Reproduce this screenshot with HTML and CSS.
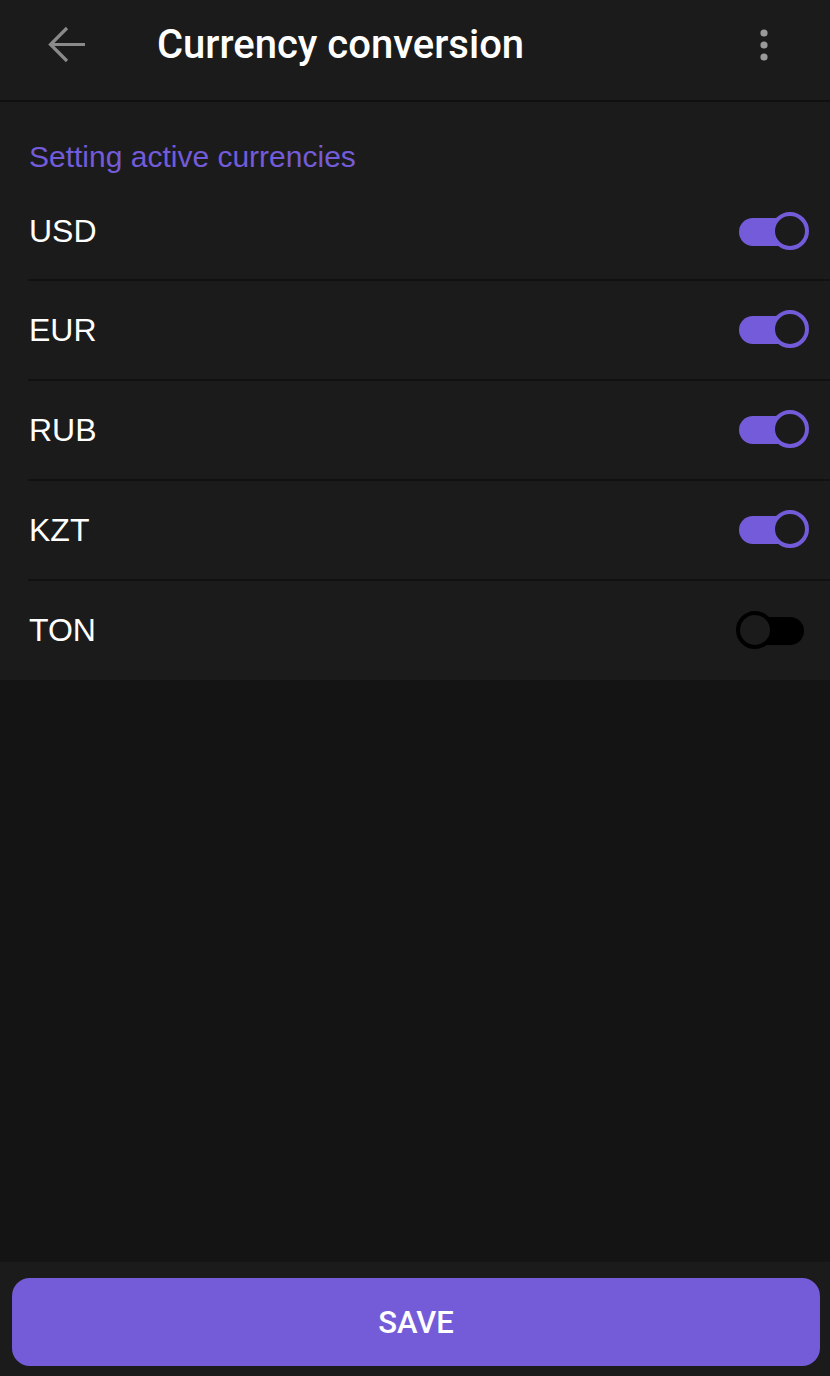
FILE: index.html
```html
<!DOCTYPE html>
<html>
<head>
<meta charset="utf-8">
<link rel="stylesheet" href="styles.css">
</head>
<body>
<div class="app">
  <header class="topbar">
    <button class="icon-btn back" aria-label="Back">
      <svg width="40" height="40" viewBox="0 0 40 40"><path d="M38 19.5H4M20 3 3.5 19.5 20 36" fill="none" stroke="#8a8a8a" stroke-width="3.2"/></svg>
    </button>
    <h1 class="title">Currency conversion</h1>
    <button class="icon-btn menu" aria-label="More">
      <svg width="10" height="36" viewBox="0 0 10 36"><circle cx="5" cy="6" r="3.6" fill="#9a9a9a"/><circle cx="5" cy="18" r="3.6" fill="#9a9a9a"/><circle cx="5" cy="30" r="3.6" fill="#9a9a9a"/></svg>
    </button>
  </header>
  <section class="settings">
    <h2 class="section-title">Setting active currencies</h2>
    <ul class="list">
      <li class="row"><span class="label">USD</span><span class="toggle on"><span class="thumb"></span></span></li>
      <li class="row"><span class="label">EUR</span><span class="toggle on"><span class="thumb"></span></span></li>
      <li class="row"><span class="label">RUB</span><span class="toggle on"><span class="thumb"></span></span></li>
      <li class="row"><span class="label">KZT</span><span class="toggle on"><span class="thumb"></span></span></li>
      <li class="row"><span class="label">TON</span><span class="toggle off"><span class="thumb"></span></span></li>
    </ul>
  </section>
  <div class="spacer"></div>
  <footer class="footer">
    <button class="save">SAVE</button>
  </footer>
</div>
</body>
</html>
```
FILE: styles.css
```css
* { box-sizing: border-box; }
html, body { margin: 0; padding: 0; background: #141414; }
.app {
  width: 830px;
  height: 1376px;
  display: flex;
  flex-direction: column;
  background: #141414;
  font-family: "Liberation Sans", Arial, sans-serif;
}
.topbar {
  height: 102px;
  flex: none;
  display: flex;
  align-items: center;
  background: #1b1b1b;
  border-bottom: 2px solid #101010;
  padding-bottom: 11px;
}
.icon-btn {
  background: none;
  border: 0;
  padding: 0;
  display: flex;
  align-items: center;
  justify-content: center;
}
.back { margin-left: 47px; width: 40px; height: 40px; }
.title {
  margin: 0 0 0 70px;
  flex: 1;
  font-family: Roboto, sans-serif;
  font-weight: 500;
  font-size: 40px;
  color: #ffffff;
}
.menu { margin-right: 61px; width: 10px; height: 36px; }
.settings {
  flex: none;
  background: #1b1b1b;
  padding: 0 0 0 28px;
}
.section-title {
  margin: 0;
  height: 80px;
  padding-top: 37px;
  font-weight: 400;
  font-size: 30px;
  line-height: 36px;
  color: #735bd9;
  padding-left: 1px;
}
.list { list-style: none; margin: 0; padding: 0; }
.row {
  height: 100px;
  display: flex;
  align-items: center;
  justify-content: space-between;
  border-bottom: 2px solid #111111;
  padding: 0 24px 0 1px;
}
.row:first-child { height: 99px; padding-top: 2px; }
.row:last-child { border-bottom: 0; height: 99px; }
.label { font-size: 32px; color: #ffffff; }
.toggle {
  position: relative;
  width: 66px;
  height: 28px;
  border-radius: 14px;
  display: block;
}
.toggle.on { background: #735bd9; margin-right: 1px; }
.toggle.off { background: #000000; width: 54px; margin-right: 2px; }
.thumb {
  position: absolute;
  top: -6px;
  width: 38px;
  height: 38px;
  border-radius: 50%;
  background: #1b1b1b;
}
.toggle.on .thumb { right: -4px; border: 4px solid #735bd9; }
.toggle.off .thumb { left: -14px; border: 4px solid #000000; }
.spacer { flex: 1; }
.footer {
  flex: none;
  height: 115px;
  background: #1b1b1b;
  padding: 16px 10px 11px 12px;
  border-top: 1px solid #151515;
}
.save {
  width: 100%;
  height: 88px;
  border: 0;
  border-radius: 18px;
  background: #745cd9;
  color: #ffffff;
  font-family: Roboto, sans-serif;
  font-weight: 500;
  font-size: 31px;
  padding-top: 1px;
}
```
